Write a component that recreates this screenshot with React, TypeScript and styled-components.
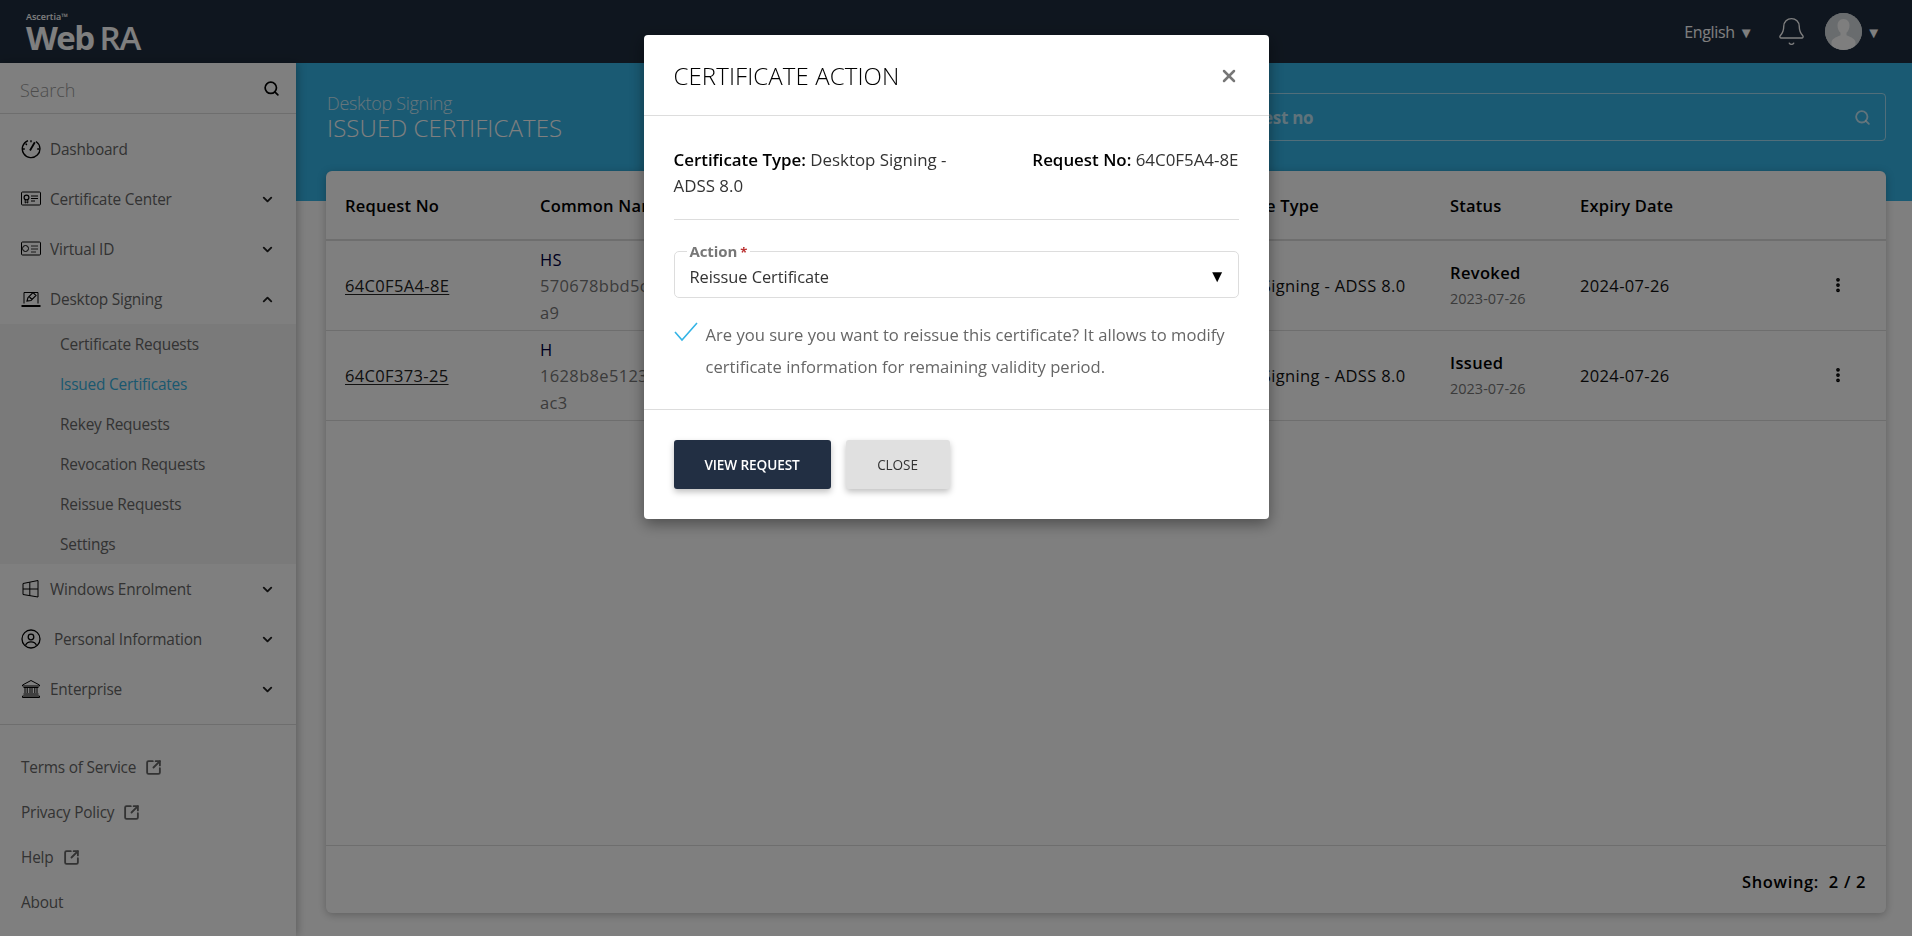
import { ReactNode } from "react";
import styled, { createGlobalStyle } from "styled-components";
import { Bell, ChevronDown, ChevronUp, EllipsisVertical, Search, SquareArrowOutUpRight, X } from "lucide-react";

const GlobalStyle = createGlobalStyle`
  html, body {
    margin: 0;
    height: 100%;
    overflow: hidden;
    font-family: "Open Sans", "Noto Sans", sans-serif;
    background: #fff;
  }
  * { box-sizing: border-box; }
`;

const Page = styled.div`
  height: 936px;
  display: flex;
  flex-direction: column;
`;

const Header = styled.header`
  height: 63px;
  flex: none;
  background: #1f2d3e;
  display: flex;
  align-items: center;
  justify-content: space-between;
  padding: 0 31px 0 26px;
`;

const Logo = styled.div`
  color: #fff;
  display: flex;
  flex-direction: column;
`;

const LogoSmall = styled.span`
  font-size: 9px;
  line-height: 10px;
  font-weight: 600;
  margin-bottom: 3px;
`;

const LogoBig = styled.span`
  font-size: 33px;
  line-height: 26px;
  font-weight: 700;
  letter-spacing: -1.6px;
  span { font-weight: 600; margin-left: 6px; letter-spacing: -1px; }
`;

const HeaderRight = styled.div`
  display: flex;
  align-items: center;
  color: #fff;
`;

const Lang = styled.span`
  font-size: 16px;
  letter-spacing: -0.35px;
  margin-right: 23px;
`;

const Caret = styled.span`
  font-size: 15px;
  margin-left: 4px;
`;

const Avatar = styled.div`
  width: 37px;
  height: 37px;
  border-radius: 50%;
  background: #d0d5d8;
  overflow: hidden;
  margin-left: 18px;
  svg { display: block; }
`;

const Body = styled.div`
  flex: 1;
  display: flex;
  min-height: 0;
`;

const Sidebar = styled.aside`
  width: 296px;
  flex: none;
  background: #fff;
  box-shadow: 2px 0 8px rgba(0, 0, 0, 0.25);
  position: relative;
  z-index: 1;
`;

const SearchRow = styled.div`
  height: 51px;
  border-bottom: 1px solid #ddd;
  display: flex;
  align-items: center;
  justify-content: space-between;
  padding: 4px 16px 0 20px;
  font-size: 18px;
  font-weight: 300;
  color: #999;
  svg { color: #000; margin-top: -3px; }
`;

const Menu = styled.nav`
  padding-top: 10px;
  padding-bottom: 10px;
  border-bottom: 1px solid #ddd;
`;

const MenuRow = styled.div`
  height: 50px;
  display: flex;
  align-items: center;
  padding: 0 21px 0 21px;
  font-size: 15.4px;
  letter-spacing: -0.2px;
  color: #666;
  svg.icon { flex: none; color: #000; }
`;

const MenuLabel = styled.span<{ $indent?: number }>`
  flex: 1;
  margin-left: ${(p) => p.$indent ?? 9}px;
`;

const SubMenu = styled.div`
  background: #f4f4f4;
`;

const SubRow = styled.div<{ $active?: boolean }>`
  height: 40px;
  display: flex;
  align-items: center;
  padding-left: 60px;
  font-size: 15.4px;
  letter-spacing: -0.2px;
  color: ${(p) => (p.$active ? "#34b0e0" : "#666")};
`;

const FooterLinks = styled.div`
  padding-top: 20px;
`;

const FooterLink = styled.div`
  height: 45px;
  display: flex;
  align-items: center;
  gap: 9px;
  padding-left: 21px;
  font-size: 15.4px;
  letter-spacing: -0.2px;
  color: #666;
`;

const Main = styled.main`
  flex: 1;
  min-width: 0;
`;

const Banner = styled.div`
  height: 138px;
  background: #34b4e6;
  display: flex;
  justify-content: space-between;
  align-items: flex-start;
  padding: 30px 26px 0 31px;
`;

const BannerTitle = styled.div`
  color: #fff;
  font-weight: 300;
`;

const BannerSub = styled.div`
  font-size: 18px;
  line-height: 21px;
  letter-spacing: -0.3px;
  opacity: 0.75;
`;

const BannerMain = styled.div`
  font-size: 24px;
  line-height: 27px;
  letter-spacing: 0.1px;
`;

const BannerSearch = styled.div`
  width: 761px;
  height: 48px;
  border: 1px solid rgba(255, 255, 255, 0.55);
  border-radius: 4px;
  display: flex;
  align-items: center;
  justify-content: space-between;
  padding: 0 14px 0 15px;
  font-size: 17px;
  font-weight: 700;
  color: rgba(255, 255, 255, 0.7);
  letter-spacing: -0.3px;
`;

const Card = styled.section`
  margin: -30px 26px 0 30px;
  height: 742px;
  background: #fff;
  border-radius: 6px;
  box-shadow: 0 2px 8px rgba(0, 0, 0, 0.25);
  display: flex;
  flex-direction: column;
  position: relative;
`;

const TableGrid = styled.div`
  display: grid;
  grid-template-columns: 195px 651px 259px 130px 1fr;
  align-items: center;
  padding-left: 19px;
`;

const HeadRow = styled(TableGrid)`
  height: 70px;
  padding-top: 1px;
  border-bottom: 2px solid #ddd;
  font-size: 16.5px;
  font-weight: 600;
  letter-spacing: 0.2px;
  color: #000;
`;

const DataRow = styled(TableGrid)`
  height: 90px;
  border-bottom: 1px solid #ddd;
  font-size: 16.5px;
  letter-spacing: 0.35px;
  color: #111;
`;

const RequestLink = styled.span`
  text-decoration: underline;
  text-underline-offset: 2px;
  color: #222;
`;

const NameCell = styled.div`
  line-height: 26.5px;
  padding-top: 2px;
  color: #000040;
`;

const HashLine = styled.div`
  color: #777;
  white-space: nowrap;
`;

const StatusName = styled.div`
  font-weight: 600;
  color: #000;
  line-height: 26px;
`;

const StatusDate = styled.div`
  font-size: 14.5px;
  line-height: 25px;
  letter-spacing: 0;
  color: #777;
`;

const ExpiryCell = styled.div`
  display: flex;
  align-items: center;
  justify-content: space-between;
`;

const MoreCell = styled.div`
  display: flex;
  justify-content: flex-end;
  padding-right: 39px;
  margin-top: -2px;
  color: #000;
`;

const CardFill = styled.div`
  flex: 1;
`;

const CardFooter = styled.div`
  height: 68px;
  border-top: 1px solid #ddd;
  display: flex;
  align-items: center;
  justify-content: flex-end;
  padding: 3px 20px 0 0;
  font-size: 16.5px;
  font-weight: 600;
  letter-spacing: 0.65px;
  color: #000;
  white-space: pre;
`;

const Overlay = styled.div`
  position: fixed;
  inset: 0;
  z-index: 5;
  background: rgba(0, 0, 0, 0.5);
  display: flex;
  justify-content: center;
  align-items: flex-start;
  padding-top: 35px;
`;

const Modal = styled.div`
  width: 625px;
  height: 484px;
  background: #fff;
  border-radius: 4px;
  box-shadow: 0 5px 15px rgba(0, 0, 0, 0.4);
  display: flex;
  flex-direction: column;
`;

const ModalHead = styled.div`
  height: 81px;
  flex: none;
  border-bottom: 1px solid #ddd;
  display: flex;
  align-items: center;
  justify-content: space-between;
  padding: 0 30px;
  font-size: 24px;
  font-weight: 300;
  letter-spacing: 0.1px;
  color: #000;
  svg { color: #777; margin-top: 1px; }
`;

const ModalBody = styled.div`
  flex: 1;
  padding: 31px 30px 0;
  border-bottom: 1px solid #ddd;
`;

const InfoRow = styled.div`
  display: flex;
  justify-content: space-between;
  height: 73px;
  border-bottom: 1px solid #ddd;
  font-size: 16.9px;
  line-height: 26px;
  letter-spacing: 0;
  color: #333;
  b { font-weight: 600; color: #000; }
`;

const InfoType = styled.div`
  width: 300px;
`;

const ActionField = styled.fieldset`
  margin: 23px 0 0;
  padding: 0 12px 0 15px;
  height: 55px;
  border: 1px solid #ddd;
  border-radius: 5px;
  display: flex;
  flex-direction: column;
`;

const ActionLegend = styled.legend`
  padding: 0 3px;
  margin-left: -3px;
  font-size: 15px;
  line-height: 16px;
  font-weight: 700;
  letter-spacing: -0.1px;
  color: #777;
  span { color: #b33; font-size: 13px; margin-left: 3px; }
`;

const ActionValue = styled.div`
  display: flex;
  align-items: center;
  justify-content: space-between;
  margin-top: 5px;
  font-size: 16.4px;
  letter-spacing: -0.05px;
  color: #333;
`;

const ActionCaret = styled.span`
  color: #000;
  font-size: 17px;
  margin-top: -3px;
`;

const Message = styled.div`
  display: flex;
  gap: 8px;
  margin-top: 21px;
  font-size: 16.6px;
  line-height: 32px;
  letter-spacing: 0;
  color: #666;
  svg { flex: none; margin-top: 3px; }
`;

const ModalFoot = styled.div`
  flex: none;
  height: 109px;
  display: flex;
  gap: 15px;
  padding: 30px 30px 0;
  align-items: flex-start;
`;

const Button = styled.button<{ $primary?: boolean }>`
  height: 49px;
  width: ${(p) => (p.$primary ? 157 : 104)}px;
  border: 0;
  border-radius: 3px;
  font-family: inherit;
  font-size: 13.6px;
  font-weight: ${(p) => (p.$primary ? 600 : 400)};
  letter-spacing: -0.1px;
  background: ${(p) => (p.$primary ? "#222f43" : "#e0e0e0")};
  color: ${(p) => (p.$primary ? "#fff" : "#333")};
  box-shadow: 0 3px 6px rgba(0, 0, 0, 0.25);
`;

const GaugeIcon = () => (
  <svg className="icon" width="20" height="20" viewBox="0 0 20 20" fill="none" stroke="currentColor" strokeWidth="1.4">
    <path d="M7 1.600A8.800 8.800 0 1 0 15 2.500" />
    <path d="M10 1.200v2M4.600 4.600l1.300 1.300M1.800 10h2M18.200 10h-2" />
    <path d="M9 11.500l4.800-8.300" strokeWidth="1.800" />
  </svg>
);

const CertIcon = () => (
  <svg className="icon" width="20" height="20" viewBox="0 0 20 20" fill="none" stroke="currentColor">
    <rect x="0.500" y="3" width="19" height="13" rx="1" strokeWidth="1" />
    <circle cx="5.500" cy="8.500" r="2.400" strokeWidth="1.200" />
    <path d="M4.200 11v3l1.300-.8 1.300.8v-3M10 7h7M10 9.500h7M10 12h4" strokeWidth="1" />
  </svg>
);

const VirtualIdIcon = () => (
  <svg className="icon" width="20" height="20" viewBox="0 0 20 20" fill="none" stroke="currentColor">
    <rect x="0.500" y="3" width="19" height="13" rx="1" strokeWidth="1" />
    <circle cx="4.500" cy="9.500" r="3" strokeWidth="1" />
    <path d="M10 7h7M10 10h7M10 13h5" strokeWidth="0.800" />
  </svg>
);

const LaptopIcon = () => (
  <svg className="icon" width="20" height="20" viewBox="0 0 20 20" fill="none" stroke="currentColor">
    <path d="M3 14.500V3.500h14v11" strokeWidth="1" />
    <path d="M0.500 17h19" strokeWidth="2" />
    <path d="M6 12l1-3.500 5-5 3 3-5 5zM8.500 8l2.500 2.500" strokeWidth="1.100" />
  </svg>
);

const WindowsIcon = () => (
  <svg className="icon" width="20" height="20" viewBox="0 0 20 20" fill="none" stroke="currentColor" strokeWidth="1">
    <path d="M2 4.500l15-3v16.500l-15-2.500zM8.800 3.200v13.800M2 10h15" />
  </svg>
);

const UserCircleIcon = () => (
  <svg className="icon" width="20" height="20" viewBox="0 0 20 20" fill="none" stroke="currentColor" strokeWidth="1.300">
    <circle cx="10" cy="10" r="9" />
    <circle cx="10" cy="8" r="2.800" />
    <path d="M4.500 16.500c1-2.800 3-3.600 5.500-3.600s4.500.8 5.500 3.600" />
  </svg>
);

const BankIcon = () => (
  <svg className="icon" width="20" height="20" viewBox="0 0 20 20" fill="none" stroke="currentColor" strokeWidth="1">
    <path d="M1.500 6L10 1.500 18.500 6v1h-17zM2.500 8.500h15M2.500 15h15M1.500 17h17v1.500h-17z" />
    <path d="M4 9v5M6.200 9v5M9 9v5M11 9v5M13.800 9v5M16 9v5" />
  </svg>
);

const AvatarFigure = () => (
  <svg width="37" height="37" viewBox="0 0 37 37">
    <rect width="37" height="37" fill="#d2d8dc" />
    <path d="M18.500 6c4 0 6 3 6 6.500 0 3-1.300 5.800-3 7.300v2.500c2.500 1.500 8 2.500 9 6.700v8.500h-24v-8.500c1-4.200 6.500-5.200 9-6.700v-2.500c-1.700-1.500-3-4.300-3-7.300C12.500 9 14.500 6 18.500 6z" fill="#fdfdfd" />
  </svg>
);

type NavItem = { label: string; icon: ReactNode; indent?: number; open?: boolean; plain?: boolean };

const topItems: NavItem[] = [
  { label: "Dashboard", icon: <GaugeIcon />, plain: true },
  { label: "Certificate Center", icon: <CertIcon /> },
  { label: "Virtual ID", icon: <VirtualIdIcon /> },
  { label: "Desktop Signing", icon: <LaptopIcon />, open: true },
];

const bottomItems: NavItem[] = [
  { label: "Windows Enrolment", icon: <WindowsIcon /> },
  { label: "Personal Information", icon: <UserCircleIcon />, indent: 13 },
  { label: "Enterprise", icon: <BankIcon /> },
];

const subItems = [
  "Certificate Requests",
  "Issued Certificates",
  "Rekey Requests",
  "Revocation Requests",
  "Reissue Requests",
  "Settings",
];

const rows = [
  { no: "64C0F5A4-8E", name: "HS", hash: "570678bbd5c4e1f09a7d3b26c8e4", tail: "a9", status: "Revoked", statusDate: "2023-07-26" },
  { no: "64C0F373-25", name: "H", hash: "1628b8e51230a94d7ce6f1b35d02", tail: "ac3", status: "Issued", statusDate: "2023-07-26" },
];

function NavRow({ item }: { item: NavItem }) {
  return (
    <MenuRow>
      {item.icon}
      <MenuLabel $indent={item.indent}>{item.label}</MenuLabel>
      {!item.plain &&
        (item.open ? <ChevronUp size={15} strokeWidth={3} color="#222" /> : <ChevronDown size={15} strokeWidth={3} color="#222" />)}
    </MenuRow>
  );
}

function App() {
  return (
    <Page>
      <GlobalStyle />
      <Header>
        <Logo>
          <LogoSmall>Ascertia™</LogoSmall>
          <LogoBig>
            Web<span>RA</span>
          </LogoBig>
        </Logo>
        <HeaderRight>
          <Lang>
            English<Caret>▼</Caret>
          </Lang>
          <Bell size={31} strokeWidth={1.05} />
          <Avatar>
            <AvatarFigure />
          </Avatar>
          <Caret>▼</Caret>
        </HeaderRight>
      </Header>
      <Body>
        <Sidebar>
          <SearchRow>
            Search
            <Search size={17} strokeWidth={2.4} />
          </SearchRow>
          <Menu>
            {topItems.map((item) => (
              <NavRow key={item.label} item={item} />
            ))}
            <SubMenu>
              {subItems.map((label) => (
                <SubRow key={label} $active={label === "Issued Certificates"}>
                  {label}
                </SubRow>
              ))}
            </SubMenu>
            {bottomItems.map((item) => (
              <NavRow key={item.label} item={item} />
            ))}
          </Menu>
          <FooterLinks>
            <FooterLink>
              Terms of Service <SquareArrowOutUpRight size={17} strokeWidth={2.6} />
            </FooterLink>
            <FooterLink>
              Privacy Policy <SquareArrowOutUpRight size={17} strokeWidth={2.6} />
            </FooterLink>
            <FooterLink>
              Help <SquareArrowOutUpRight size={17} strokeWidth={2.6} />
            </FooterLink>
            <FooterLink>About</FooterLink>
          </FooterLinks>
        </Sidebar>
        <Main>
          <Banner>
            <BannerTitle>
              <BannerSub>Desktop Signing</BannerSub>
              <BannerMain>ISSUED CERTIFICATES</BannerMain>
            </BannerTitle>
            <BannerSearch>
              Search by request no
              <Search size={17} strokeWidth={2.6} />
            </BannerSearch>
          </Banner>
          <Card>
            <HeadRow>
              <div>Request No</div>
              <div>Common Name</div>
              <div>Certificate Type</div>
              <div>Status</div>
              <div>Expiry Date</div>
            </HeadRow>
            {rows.map((row) => (
              <DataRow key={row.no}>
                <div>
                  <RequestLink>{row.no}</RequestLink>
                </div>
                <NameCell>
                  {row.name}
                  <HashLine>{row.hash}</HashLine>
                  <HashLine>{row.tail}</HashLine>
                </NameCell>
                <div>Desktop Signing - ADSS 8.0</div>
                <div>
                  <StatusName>{row.status}</StatusName>
                  <StatusDate>{row.statusDate}</StatusDate>
                </div>
                <ExpiryCell>
                  2024-07-26
                  <MoreCell>
                    <EllipsisVertical size={18} strokeWidth={3} />
                  </MoreCell>
                </ExpiryCell>
              </DataRow>
            ))}
            <CardFill />
            <CardFooter>Showing:  2 / 2</CardFooter>
          </Card>
        </Main>
      </Body>
      <Overlay>
        <Modal>
          <ModalHead>
            CERTIFICATE ACTION
            <X size={20} strokeWidth={3} />
          </ModalHead>
          <ModalBody>
            <InfoRow>
              <InfoType>
                <b>Certificate Type:</b> Desktop Signing - ADSS 8.0
              </InfoType>
              <div>
                <b>Request No:</b> 64C0F5A4-8E
              </div>
            </InfoRow>
            <ActionField>
              <ActionLegend>
                Action<span>*</span>
              </ActionLegend>
              <ActionValue>
                Reissue Certificate
                <ActionCaret>▼</ActionCaret>
              </ActionValue>
            </ActionField>
            <Message>
              <svg width="24" height="20" viewBox="0 0 24 20" fill="none" stroke="#34b4e6" strokeWidth="1.6">
                <path d="M1 10l7 8L23 1" />
              </svg>
              <div>Are you sure you want to reissue this certificate? It allows to modify certificate information for remaining validity period.</div>
            </Message>
          </ModalBody>
          <ModalFoot>
            <Button $primary>VIEW REQUEST</Button>
            <Button>CLOSE</Button>
          </ModalFoot>
        </Modal>
      </Overlay>
    </Page>
  );
}

export default App;
